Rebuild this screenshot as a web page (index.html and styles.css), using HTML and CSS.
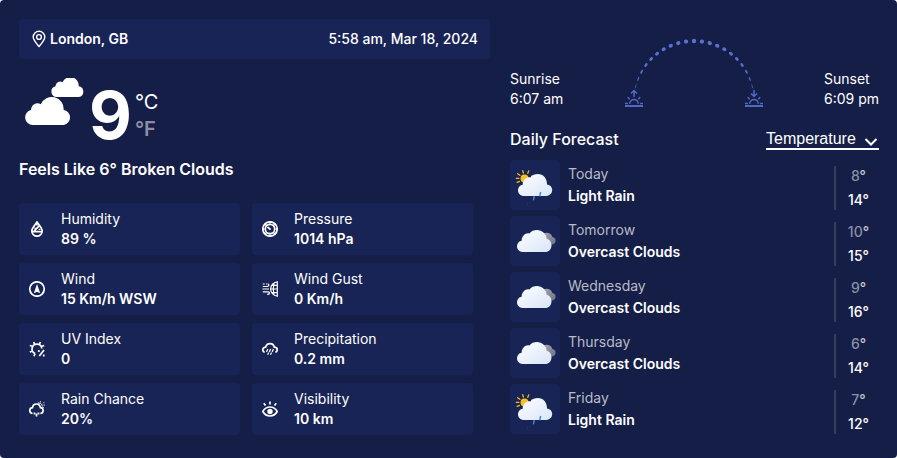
FILE: index.html
```
<!DOCTYPE html>
<html lang="en">
<head>
<meta charset="utf-8">
<meta name="viewport" content="width=device-width, initial-scale=1">
<title>London, GB weather</title>
<link rel="stylesheet" href="styles.css">
</head>
<body>
<svg class="sprite" aria-hidden="true">
  <defs>
    <linearGradient id="cloud-fill" x1="0" y1="0" x2="1" y2="1">
      <stop offset="0.3" stop-color="#f3f7fe"/><stop offset="1" stop-color="#d9e5f8"/>
    </linearGradient>
    <linearGradient id="grey-fill" x1="0" y1="0" x2="1" y2="1">
      <stop offset="0" stop-color="#a5a9b2"/><stop offset="1" stop-color="#6b7280"/>
    </linearGradient>
  </defs>
  <symbol id="overcast" viewBox="0 0 50 50">
    <path fill="url(#grey-fill)" d="M33 18c2.500-2.200 8.500-1.200 9.300 3 2.200.2 3.500 2 3.300 4-.2 2-1.800 3.500-4 3.500H35z"/>
    <path fill="url(#cloud-fill)" d="M12.500 36C9.500 36 7 33.500 7 30.300c0-3 2-5.200 4.700-5.600C11.700 20 15.500 16.500 19.300 17.500 21.300 15 24 14 27 14c5 0 9 3.600 9.700 8.700 2.700.5 4.800 3.200 4.800 6.500 0 4-2.800 6.800-6.300 6.800z"/>
  </symbol>
  <symbol id="light-rain" viewBox="0 0 50 50">
    <circle cx="14.500" cy="18.500" r="4" fill="#fbbf24"/>
    <circle cx="22.500" cy="17" r="1.700" fill="#fbbf24"/>
    <path fill="none" stroke="#fbb81e" stroke-width="1.300" stroke-linecap="round" d="M12.700 10.600l.7 2.600M18.700 10.900l-.9 2.400M7.600 13.700l2.300 1.600M6.300 18.300l2.600.1M7.200 22.400l2.200-1"/>
    <path fill="none" stroke="#182f78" stroke-linecap="round" d="M17.800 42.500l-.5 2"/>
    <path fill="url(#cloud-fill)" d="M13.500 36C10.500 36 8 33.500 8 30.300c0-3 2-5.200 4.700-5.600C12.700 20 16.500 16.500 20.300 17.500 22.300 15 25 14 28 14c5 0 9 3.600 9 10.500 2.700.3 5.200 2.200 5.200 5.500 0 3.600-2.800 6-6.300 6z"/>
    <path fill="none" stroke="#4084e8" stroke-width="1.400" d="M30.600 32l-.8 4.300M24.200 36l-.8 4.300"/>
  </symbol>
</svg>

<main class="card">
  <section class="now">
    <header class="bar">
      <svg class="pin" viewBox="0 0 14 18" aria-hidden="true"><path d="M7 16.500C4 13 1.200 10 1.200 7a5.800 5.800 0 0 1 11.600 0C12.800 10 10 13 7 16.500z"/><circle cx="7" cy="7" r="2.400"/></svg>
      <h1 class="place">London, GB</h1>
      <time class="stamp">5:58 am, Mar 18, 2024</time>
    </header>

    <div class="current">
      <svg class="clouds" viewBox="0 0 60 48" aria-hidden="true">
        <path id="puff" d="M7.700 47A7.600 7.600 0 0 1 6 32 6.600 6.600 0 0 1 15.800 26.200a11.900 11.900 0 0 1 22.800 5.800A7.600 7.600 0 0 1 38.800 47z"/>
        <use href="#puff" transform="translate(26.300 -14.400) scale(.71)"/>
      </svg>
      <span class="degrees">9</span>
      <span class="units"><span>°C</span><span class="unit-off">°F</span></span>
    </div>
    <p class="feels">Feels Like 6° Broken Clouds</p>

    <dl class="tiles">
      <div class="tile">
        <svg viewBox="0 0 16 16" aria-hidden="true"><path d="M8 1C6 4 2.800 7 2.800 10a5.200 5.200 0 0 0 10.400 0C13.200 7 10 4 8 1z"/><path d="M3 10.600h10M5.200 9.800l5-5M5.800 6.500v1M10.500 7.800v1.200M8 1.500v3"/></svg>
        <div><dt>Humidity</dt><dd>89 %</dd></div>
      </div>
      <div class="tile">
        <svg viewBox="0 0 16 16" aria-hidden="true"><circle cx="8" cy="8" r="7.200"/><circle cx="8" cy="8" r="4.700"/><path d="M5.500 6l2.600 2.200M7.500 8.200h1.200M8 1v1.500M8 13.500V15M1 8h1.500M13.500 8H15M3.200 3.200l1 1M12.800 3.200l-1 1M3.200 12.800l1-1M12.800 12.800l-1-1"/></svg>
        <div><dt>Pressure</dt><dd>1014 hPa</dd></div>
      </div>
      <div class="tile">
        <svg viewBox="0 0 16 16" aria-hidden="true"><circle cx="8" cy="8" r="7.200"/><path class="solid" d="M8 3l3.200 9.300L8 10.800l-3.200 1.500z"/></svg>
        <div><dt>Wind</dt><dd>15 Km/h WSW</dd></div>
      </div>
      <div class="tile">
        <svg class="fine" viewBox="0 0 16 16" aria-hidden="true"><path d="M15.300.8v14.400C11.500 14.500 9 12 8.500 8 9 4 11.500 1.500 15.300.8zM12 2.400c-1 3.500-1 7.700 0 11.200M10 4.300h5.300M8.500 8h6.800M10 11.700h5.300M.8 3h2M4 3h1.300M.8 5.500h4.500c2 0 2-2.500.5-2.500M.5 8h6.500M.8 10.800h5.400c2 0 1.500 3-1 2.400"/></svg>
        <div><dt>Wind Gust</dt><dd>0 Km/h</dd></div>
      </div>
      <div class="tile">
        <svg viewBox="0 0 16 16" aria-hidden="true"><path d="M6.200 12.600A4.900 4.900 0 1 1 12.800 7.500M5.500 3.200L4.700 1M10.500 3.200l.8-2.200M3.500 5.300L.8 4.500M12.700 5.300l2.500-.8M3.300 10L.8 11M6 12.700L5 15.200M15 9L10.300 15M9.800 9v2M14.700 13.500v2"/></svg>
        <div><dt>UV Index</dt><dd>0</dd></div>
      </div>
      <div class="tile">
        <svg viewBox="0 0 16 16" aria-hidden="true"><path d="M2.700 11.300C1.500 11 .8 9.800.8 8.700.8 7.200 2 6.200 3.600 6.200 4.100 4 5.800 2.600 8 2.600s3.900 1.400 4.300 3.600c1.800 0 2.900 1 2.900 2.500 0 1.300-.7 2.300-1.900 2.600"/><path class="fine" d="M5.800 8l-1.300 3M8.600 8l-1.300 3M11.400 8l-1.300 3M6.700 11.500l-1 2.300M9.500 11.500l-1 2.300"/></svg>
        <div><dt>Precipitation</dt><dd>0.2 mm</dd></div>
      </div>
      <div class="tile">
        <svg viewBox="0 0 16 16" aria-hidden="true"><path d="M3.500 12.500C1.800 12.300.8 11 .8 9.500c0-1.600 1.100-2.700 2.700-2.800C3.800 4.300 5.400 3 7.400 3s3.600 1.400 4 3.700c1.600.1 2.700 1.200 2.700 2.800 0 1.500-1 2.800-2.700 3M5.500 11.500v2M7.500 12.500v3M9.500 11.500v2"/><path class="thin" d="M9.500 2.500c1.500-1 4 .5 3.700 3M11.500.3v1M15.200 1.200l-1 1M14.500 4h1.300M13.800 6.200l1 .5M9 .8l.6.8"/></svg>
        <div><dt>Rain Chance</dt><dd>20%</dd></div>
      </div>
      <div class="tile">
        <svg viewBox="0 0 16 16" aria-hidden="true"><path d="M.8 10.500C2.500 7.500 5 6 8 6s5.500 1.500 7.200 4.500C13.500 13.500 11 15 8 15S2.500 13.500.800 10.500zM8 .5v3M1.800 2.300l1.700 2.200M14.200 2.300l-1.700 2.200"/><circle class="solid" cx="8" cy="10.500" r="2.700"/></svg>
        <div><dt>Visibility</dt><dd>10 km</dd></div>
      </div>
    </dl>
  </section>

  <section class="outlook">
    <div class="sun">
      <p>Sunrise<br>6:07 am</p>
      <svg class="arc" viewBox="0 0 140 72" aria-hidden="true">
        <g class="dots">
          <ellipse cx="70" cy="4" rx="2.200" ry="2.200"/>
          <g id="arc-left">
            <ellipse cx="70" cy="4" rx="2.200" ry="2.100" transform="rotate(-7.600 70 64)"/>
            <ellipse cx="70" cy="4" rx="2.200" ry="2" transform="rotate(-15.200 70 64)"/>
            <ellipse cx="70" cy="4" rx="2.200" ry="1.900" transform="rotate(-22.800 70 64)"/>
            <ellipse cx="70" cy="4" rx="2.200" ry="1.800" transform="rotate(-30.400 70 64)"/>
            <ellipse cx="70" cy="4" rx="2.200" ry="1.600" transform="rotate(-38 70 64)"/>
            <ellipse cx="70" cy="4" rx="2.200" ry="1.400" transform="rotate(-45.600 70 64)"/>
            <ellipse cx="70" cy="4" rx="2.200" ry="1.200" transform="rotate(-53.200 70 64)"/>
            <ellipse cx="70" cy="4" rx="2.200" ry=".9" transform="rotate(-60.800 70 64)"/>
            <ellipse cx="70" cy="4" rx="2.200" ry=".6" transform="rotate(-68.400 70 64)"/>
            <ellipse cx="70" cy="4" rx="2.200" ry=".4" transform="rotate(-76 70 64)"/>
          </g>
          <use href="#arc-left" transform="translate(140 0) scale(-1 1)"/>
        </g>
        <g class="horizon">
          <g id="half-sun">
            <path class="ground" d="M1 69h18"/>
            <path d="M1 66.500h3M16 66.500h3M5.700 66.800a4.300 4.300 0 0 1 8.600 0M3.800 60.300l1.800 1.800M16.200 60.300l-1.800 1.800"/>
          </g>
          <path d="M10 60v-6.500M7 56.500l3-3 3 3"/>
          <use href="#half-sun" x="120"/>
          <path d="M130 53v6.300M127 56.500l3 3 3-3"/>
        </g>
      </svg>
      <p>Sunset<br>6:09 pm</p>
    </div>

    <div class="heading">
      <h2>Daily Forecast</h2>
      <div class="picker">
        <select aria-label="Forecast value"><option>Temperature</option><option>Wind</option></select>
        <svg viewBox="0 0 14 8" aria-hidden="true"><path d="M1.500 1L7 6.500 12.500 1"/></svg>
      </div>
    </div>

    <ul class="days">
      <li><svg class="sky" viewBox="0 0 50 50" aria-hidden="true"><use href="#light-rain"/></svg><p class="day">Today<b>Light Rain</b></p><p class="range"><span><i>8</i>°</span><span>14°</span></p></li>
      <li><svg class="sky" viewBox="0 0 50 50" aria-hidden="true"><use href="#overcast"/></svg><p class="day">Tomorrow<b>Overcast Clouds</b></p><p class="range"><span><i>10</i>°</span><span>15°</span></p></li>
      <li><svg class="sky" viewBox="0 0 50 50" aria-hidden="true"><use href="#overcast"/></svg><p class="day">Wednesday<b>Overcast Clouds</b></p><p class="range"><span><i>9</i>°</span><span>16°</span></p></li>
      <li><svg class="sky" viewBox="0 0 50 50" aria-hidden="true"><use href="#overcast"/></svg><p class="day">Thursday<b>Overcast Clouds</b></p><p class="range"><span><i>6</i>°</span><span>14°</span></p></li>
      <li><svg class="sky" viewBox="0 0 50 50" aria-hidden="true"><use href="#light-rain"/></svg><p class="day">Friday<b>Light Rain</b></p><p class="range"><span><i>7</i>°</span><span>12°</span></p></li>
    </ul>
  </section>
</main>
</body>
</html>
```
FILE: styles.css
```
* { box-sizing: border-box; }
body {
  margin: 0;
  background: #fff;
  color: #fff;
  font: 14px/20px Inter, "Liberation Sans", sans-serif;
}
h1, h2, p, dl, dd, ul { margin: 0; padding: 0; }
.sprite { position: absolute; width: 0; height: 0; }

.card {
  display: grid;
  grid-template-columns: 471fr 369fr;
  gap: 20px;
  min-height: 100vh;
  padding: 19px 18px 23px 19px;
  border-radius: 4px;
  background: #151e47;
}

.bar {
  display: flex;
  align-items: center;
  height: 40px;
  padding: 0 12px 0 13px;
  border-radius: 4px;
  background: #182455;
}
.pin { width: 14px; height: 18px; margin-right: 4px; fill: none; stroke: #fff; stroke-width: 1.4; }
.place { font-size: 14px; line-height: 20px; font-weight: 600; }
.stamp { margin-left: auto; font-weight: 500; }

.current { display: flex; align-items: flex-start; height: 100px; padding: 19px 0 0 6px; }
.clouds { width: 60px; height: 48px; fill: #fff; }
.degrees { margin-left: 4px; font-size: 66px; line-height: 74px; font-weight: 700; }
.units { display: flex; flex-direction: column; margin: 11px 0 0 3px; font-size: 20px; line-height: 27px; }
.unit-off { color: #8b8fa3; font-weight: 600; }
.feels { font-size: 16px; font-weight: 600; }

.tiles { display: grid; grid-template-columns: 1fr 1fr; gap: 8px 12px; margin: 24px 17px 0 0; }
.tile {
  display: flex;
  align-items: center;
  gap: 16px;
  height: 52px;
  padding: 0 10px;
  border-radius: 4px;
  background: #182455;
}
.tile svg { flex: none; width: 16px; height: 16px; fill: none; stroke: #fff; stroke-width: 1.7; }
.tile .fine { stroke-width: 1.2; }
.tile .thin { stroke-width: 1; }
.tile .solid { fill: #fff; stroke: none; }
.tile dd { font-weight: 600; }

.sun { display: flex; justify-content: space-between; align-items: flex-end; height: 90px; }
.arc { width: 140px; height: 72px; }
.dots { fill: #5872d2; }
.horizon { fill: none; stroke: #5269c4; stroke-width: 1.5; }
.ground { stroke-width: 2; }

.heading { display: flex; justify-content: space-between; align-items: flex-end; margin-top: 19px; }
.heading h2 { font-size: 16px; line-height: 22px; font-weight: 500; }
.picker {
  display: flex;
  align-items: center;
  position: relative;
  border-bottom: 2px solid #fff;
}
.picker select {
  appearance: none;
  height: 20px;
  padding: 2px 23px 0 0;
  border: 0;
  background: none;
  color: #fff;
  font: 16px/18px "Liberation Sans", Arial, sans-serif;
}
.picker svg {
  position: absolute;
  right: 1px;
  bottom: 2px;
  width: 14px;
  height: 8px;
  fill: none;
  stroke: #fff;
  stroke-width: 2;
  pointer-events: none;
}

.days { display: grid; gap: 6px; margin-top: 10px; list-style: none; }
.days li { display: flex; align-items: center; height: 50px; }
.sky { width: 50px; height: 50px; border-radius: 4px; background: #182455; }
.day { margin-left: 8px; color: #b9bbc7; line-height: 22px; }
.day b { display: block; color: #fff; font-weight: 600; }
.range {
  display: flex;
  flex-direction: column;
  gap: 4px;
  align-self: flex-end;
  align-items: center;
  width: 45px;
  height: 44px;
  margin-left: auto;
  padding-left: 2px;
  border-left: 2px solid #363e60;
  font-weight: 500;
}
.range span:first-child { color: #c5c7d1; }
.range i { color: #8b8fa3; font-style: normal; font-weight: 500; }
```
